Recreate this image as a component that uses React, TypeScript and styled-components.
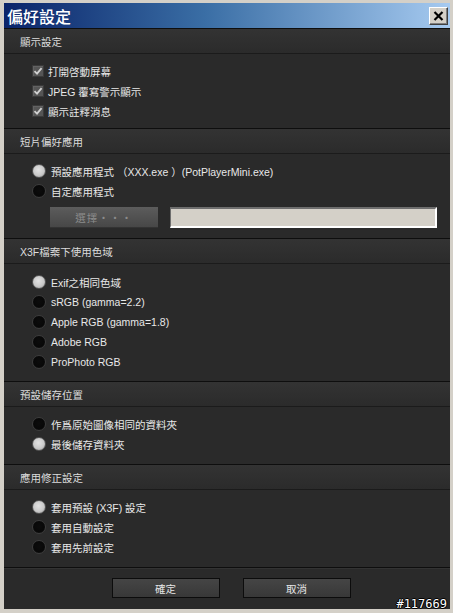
import styled, { createGlobalStyle } from "styled-components"

const GlobalStyle = createGlobalStyle`
    html, body {
        margin: 0;
        padding: 0;
        background: #d4d0c8;
    }
    body {
        font-family: "Liberation Sans", "Noto Sans CJK TC", sans-serif;
        font-size: 10.5px;
    }
    * {
        box-sizing: border-box;
    }
`

type optionType = {
    label: string
    checked?: boolean
}

type sectionPropsType = {
    title: string
    children: React.ReactNode
    top?: number
    bottom?: number
}

const Section = (props: sectionPropsType) => {
    return (
        <StyledSection>
            <SectionHeader>{props.title}</SectionHeader>
            <SectionBody $top={props.top ?? 7} $bottom={props.bottom ?? 9}>
                {props.children}
            </SectionBody>
        </StyledSection>
    )
}

const CheckRow = (props: optionType) => {
    return (
        <Row>
            <CheckBox>
                {props.checked && (
                    <svg width="10" height="10" viewBox="0 0 10 10">
                        <path d="M1.5 5.2 L4 7.6 L8.6 2.2" fill="none" stroke="#d0d0d0" strokeWidth="1.8" />
                    </svg>
                )}
            </CheckBox>
            <Label>{props.label}</Label>
        </Row>
    )
}

const RadioRow = (props: optionType) => {
    return (
        <Row>
            <Radio $checked={!!props.checked} />
            <RadioLabel>{props.label}</RadioLabel>
        </Row>
    )
}

const RadioGroup = (props: { options: optionType[] }) => {
    return (
        <>
            {props.options.map((o) => (
                <RadioRow key={o.label} label={o.label} checked={o.checked} />
            ))}
        </>
    )
}

export default function App() {
    return (
        <Window>
            <GlobalStyle />
            <TitleBar>
                <Title>偏好設定</Title>
                <CloseButton>
                    <svg width="11" height="10" viewBox="0 0 11 10">
                        <path d="M1.5 1 L9.5 9 M9.5 1 L1.5 9" stroke="#000" strokeWidth="2.2" />
                    </svg>
                </CloseButton>
            </TitleBar>
            <Panel>
                <Section title="顯示設定" top={7} bottom={7}>
                    <CheckRow label="打開啓動屏幕" checked />
                    <CheckRow label="JPEG 覆寫警示顯示" checked />
                    <CheckRow label="顯示註釋消息" checked />
                </Section>
                <Section title="短片偏好應用" top={7} bottom={10}>
                    <RadioGroup
                        options={[
                            { label: "預設應用程式 （XXX.exe ）(PotPlayerMini.exe)", checked: true },
                            { label: "自定應用程式" },
                        ]}
                    />
                    <PathRow>
                        <BrowseButton>選擇・・・</BrowseButton>
                        <PathField />
                    </PathRow>
                </Section>
                <Section title="X3F檔案下使用色域" top={8} bottom={9}>
                    <RadioGroup
                        options={[
                            { label: "Exif之相同色域", checked: true },
                            { label: "sRGB (gamma=2.2)" },
                            { label: "Apple RGB (gamma=1.8)" },
                            { label: "Adobe RGB" },
                            { label: "ProPhoto RGB" },
                        ]}
                    />
                </Section>
                <Section title="預設儲存位置" top={7} bottom={10}>
                    <RadioGroup
                        options={[
                            { label: "作爲原始圖像相同的資料夾" },
                            { label: "最後儲存資料夾", checked: true },
                        ]}
                    />
                </Section>
                <Section title="應用修正設定" top={7} bottom={10}>
                    <RadioGroup
                        options={[
                            { label: "套用預設 (X3F) 設定", checked: true },
                            { label: "套用自動設定" },
                            { label: "套用先前設定" },
                        ]}
                    />
                </Section>
                <Footer>
                    <DialogButton>確定</DialogButton>
                    <DialogButton>取消</DialogButton>
                </Footer>
            </Panel>
            <Watermark>#117669</Watermark>
        </Window>
    )
}

const Window = styled.div`
    position: relative;
    width: 453px;
    height: 613px;
    padding: 3px 3px 4px 4px;
    background: #d4d0c8;
    display: flex;
    flex-direction: column;
`

const TitleBar = styled.div`
    height: 25px;
    display: flex;
    align-items: center;
    justify-content: space-between;
    padding: 0 2px 0 3px;
    background: linear-gradient(90deg, #0a246a 0%, #3a6ea5 45%, #a6caf0 100%);
`

const Title = styled.h1`
    margin: 0;
    color: #ffffff;
    font-family: "Noto Sans CJK TC", sans-serif;
    font-size: 16px;
    font-weight: 500;
    line-height: 1;
`

const CloseButton = styled.div`
    width: 19px;
    height: 18px;
    display: flex;
    align-items: center;
    justify-content: center;
    background: #d4d0c8;
    border: 1px solid;
    border-color: #ffffff #404040 #404040 #ffffff;
    box-shadow: inset -1px -1px 0 #808080;
`

const Panel = styled.div`
    flex: 1;
    display: flex;
    flex-direction: column;
    background: #2a2a2a;
`

const StyledSection = styled.section`
    border-top: 1px solid #0e0e0e;
`

const SectionHeader = styled.div`
    height: 25px;
    display: flex;
    align-items: center;
    padding: 1px 0 0 16px;
    color: #dcdcdc;
    background: linear-gradient(#333333, #2b2b2b);
    border-bottom: 1px solid #1b1b1b;
`

const SectionBody = styled.div<{ $top: number; $bottom: number }>`
    display: flex;
    flex-direction: column;
    padding: ${(p) => p.$top}px 0 ${(p) => p.$bottom}px 28px;
`

const Row = styled.div`
    height: 20px;
    display: flex;
    align-items: center;
`

const CheckBox = styled.div`
    width: 12px;
    height: 12px;
    display: flex;
    align-items: center;
    justify-content: center;
    background: #555555;
    border: 1px solid #3a3a3a;
    box-shadow: inset 1px 1px 0 #626262;
`

const Label = styled.span`
    margin-left: 4px;
    color: #e8e8e8;
    white-space: nowrap;
`

const RadioLabel = styled(Label)`
    margin-left: 5px;
`

const Radio = styled.div<{ $checked: boolean }>`
    width: 14px;
    height: 14px;
    border-radius: 50%;
    border: 1px solid ${(p) => (p.$checked ? "#555555" : "#3c3c3c")};
    background: ${(p) =>
        p.$checked
            ? "radial-gradient(circle at 45% 40%, #e2e2e2 0%, #cacaca 55%, #9a9a9a 100%)"
            : "radial-gradient(circle at 50% 45%, #0c0c0c 0%, #080808 60%, #1e1e1e 100%)"};
`

const PathRow = styled.div`
    display: flex;
    gap: 12px;
    margin: 6px 0 0 18px;
`

const BrowseButton = styled.div`
    width: 108px;
    height: 21px;
    display: flex;
    align-items: center;
    justify-content: center;
    color: #8c8c8c;
    background: linear-gradient(#5c5c5c, #474747);
    border-bottom: 1px solid #333333;
    letter-spacing: 1px;
`

const PathField = styled.div`
    width: 267px;
    height: 21px;
    background: #d4d0c8;
    border: 1px solid;
    border-color: #6e6e6e #ffffff #ffffff #6e6e6e;
    border-width: 2px 2px 2px 1px;
`

const Footer = styled.div`
    flex: 1;
    display: flex;
    justify-content: center;
    gap: 23px;
    padding: 10px 0 0 8px;
    border-top: 1px solid #0e0e0e;
    box-shadow: inset 0 1px 0 #333333;
`

const DialogButton = styled.div`
    width: 108px;
    height: 20px;
    display: flex;
    align-items: center;
    justify-content: center;
    color: #e6e6e6;
    background: linear-gradient(#454545, #383838);
    border: 1px solid #0c0c0c;
`

const Watermark = styled.div`
    position: absolute;
    right: 6px;
    bottom: 2px;
    color: #ffffff;
    font-family: "DejaVu Sans Mono", monospace;
    font-size: 12px;
    line-height: 14px;
    text-shadow: -1px 0 #000, 1px 0 #000, 0 -1px #000, 0 1px #000;
`
